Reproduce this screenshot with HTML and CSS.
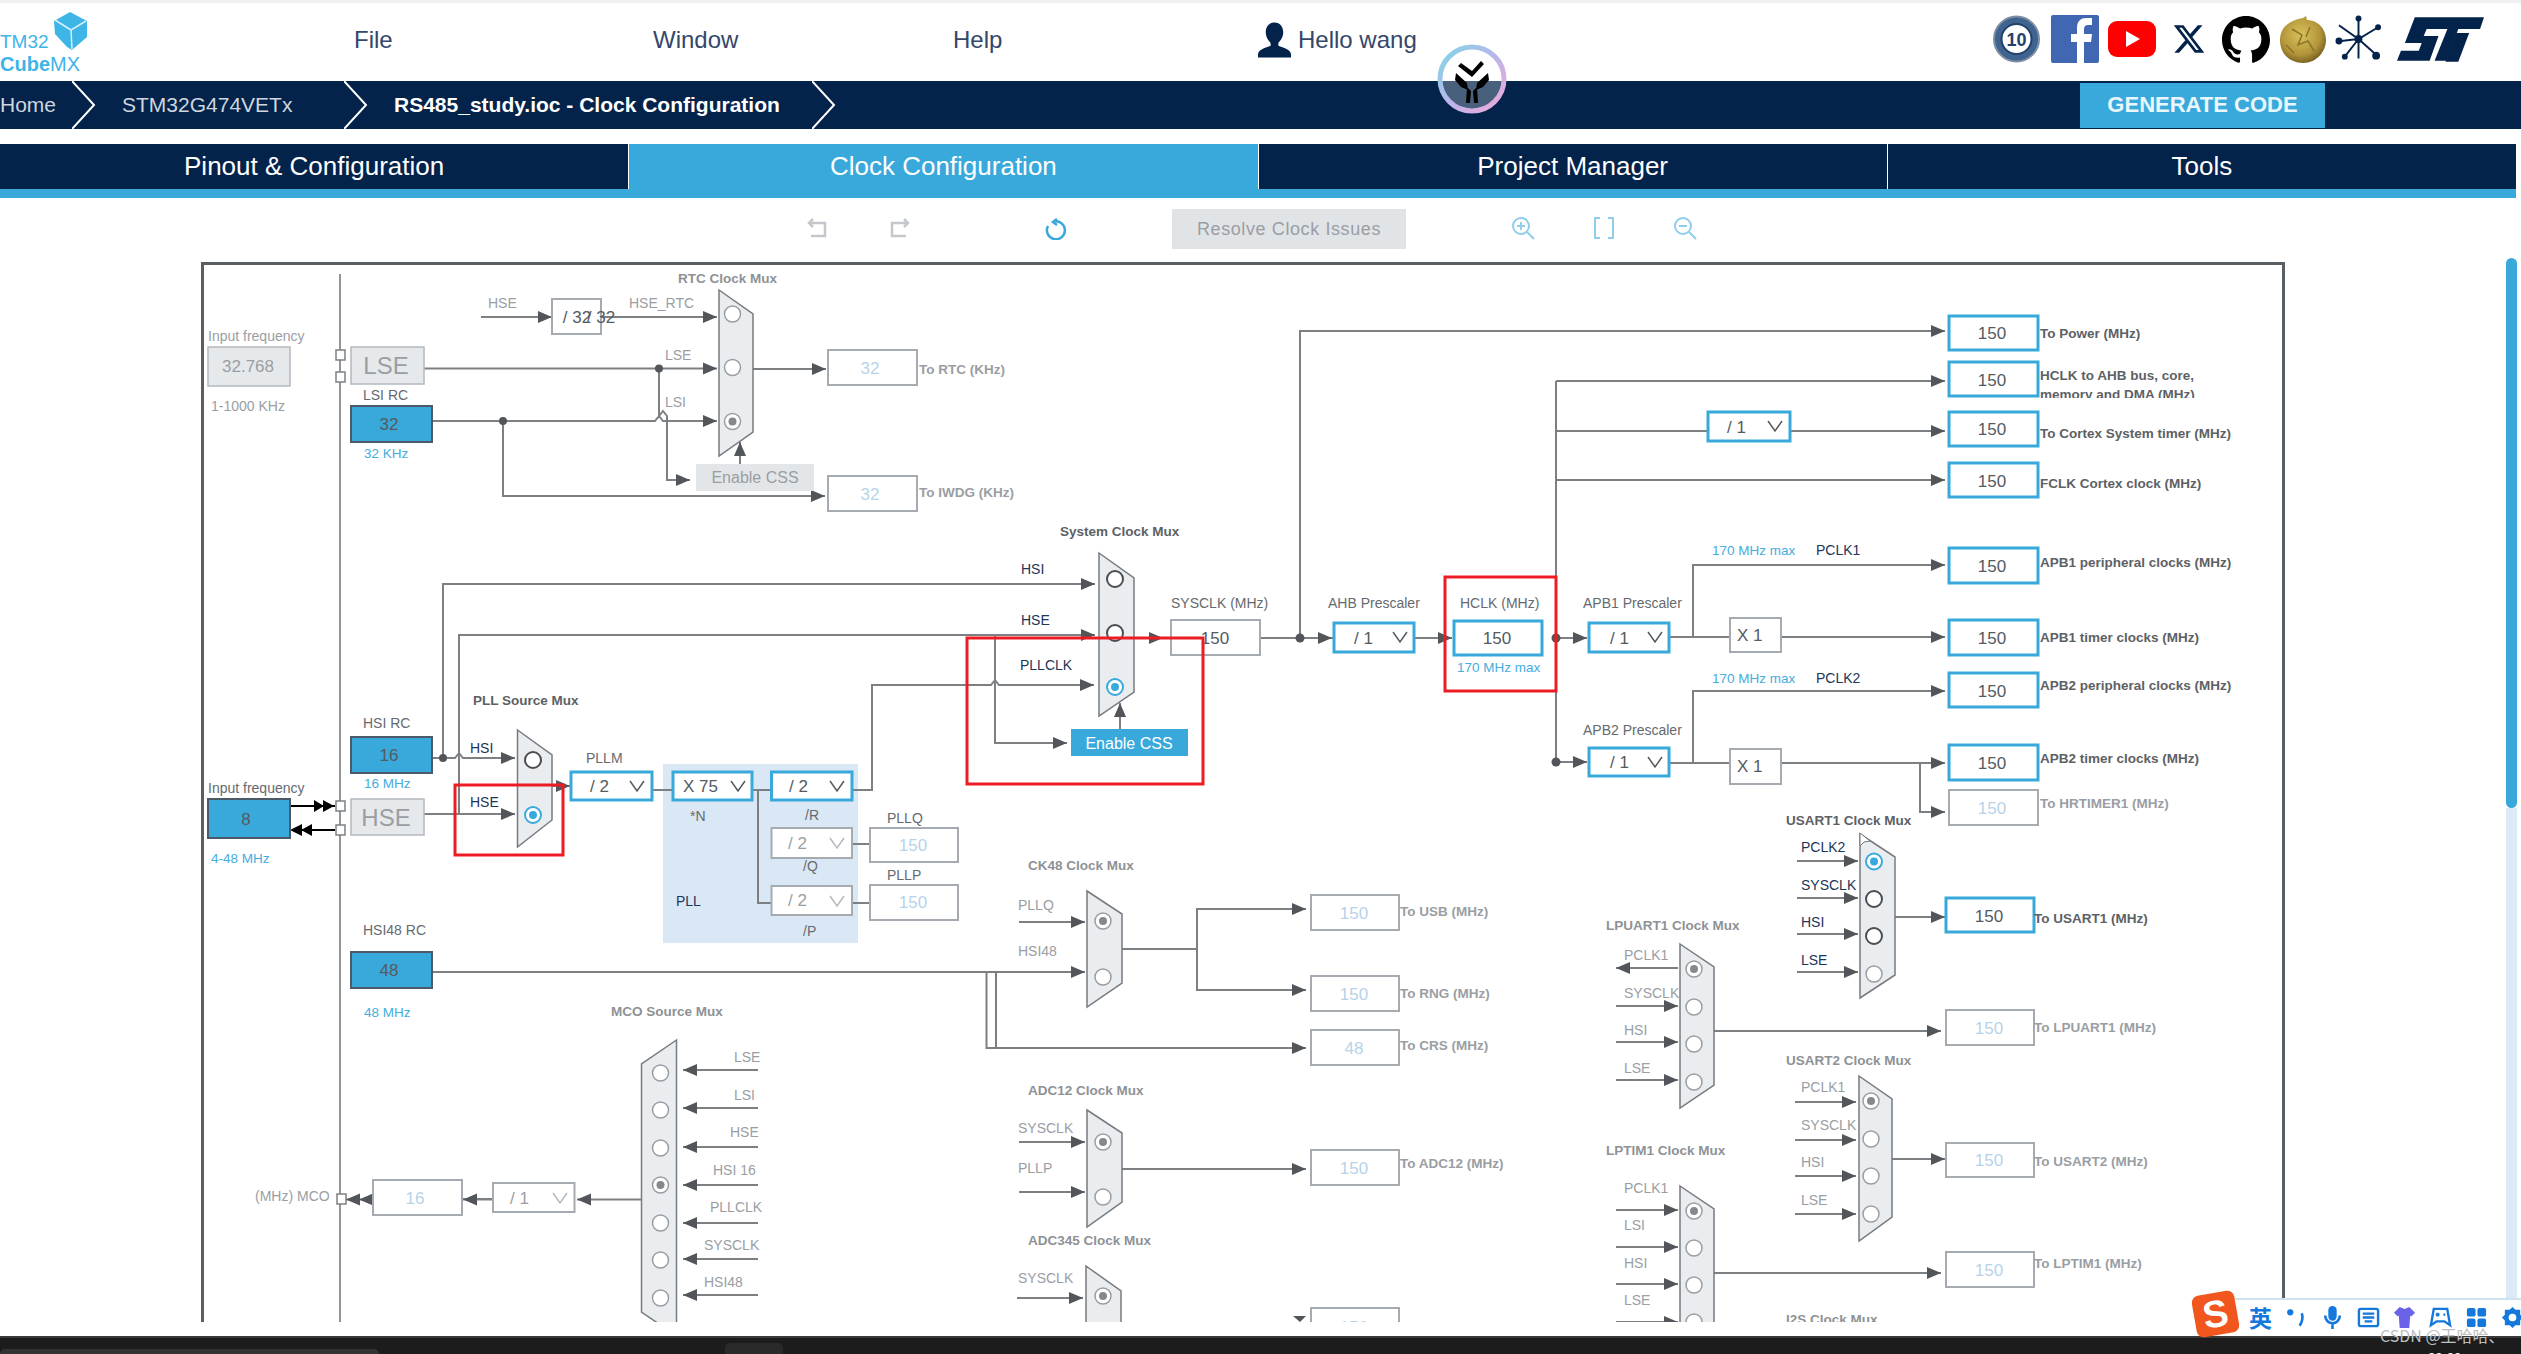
FILE: index.html
```html
<!DOCTYPE html>
<html lang="en">
<head>
<meta charset="utf-8">
<title>STM32CubeMX RS485_study.ioc: Clock Configuration</title>
<link rel="stylesheet" href="styles.css">
</head>
<body>
<div class="page">
  <header class="head">
    <div class="logo">
      <div class="logo-words"><div class="lg1">TM32</div><div class="lg2"><b>Cube</b>MX</div></div>
      <svg class="cube" viewBox="0 0 35 38"><path class="cube-a" d="M17 0 34 9 34 25 19 38 14 35 2 22 1 9Z"/><path class="cube-l" d="M2 8 18 18 33 9M18 18 19 37"/></svg>
    </div>
    <nav class="menu"><span>File</span><span>Window</span><span>Help</span></nav>
    <div class="user">
      <svg class="user-ic" viewBox="0 0 34 36"><path class="navy" d="M17 0c6 0 9 5 9 10 0 5-3 9-5 11v3c5 2 13 4 13 9v3H0v-3c0-5 8-7 13-9v-3c-2-2-5-6-5-11C8 5 11 0 17 0Z"/></svg>
      <span>Hello wang</span>
    </div>
    <div class="social">
      <svg class="s47" viewBox="0 0 47 48"><circle class="s10a" cx="23.500" cy="24" r="22.500"/><circle class="s10b" cx="23.500" cy="24" r="15"/><text class="s10t" x="23.500" y="25">10</text></svg>
      <svg class="s47 fb" viewBox="0 0 48 48"><rect class="fb-bg" width="48" height="48" rx="2"/><path class="white" d="M26 48V27h-6v-8h6v-6c0-7 4-10 9-10h6v7h-4c-3 0-4 2-4 4v5h8l-1 8h-7v21Z"/></svg>
      <svg class="s47 yt" viewBox="0 0 48 36"><rect class="yt-bg" width="48" height="36" rx="9"/><path class="white" d="M18 10v16l14-8Z"/></svg>
      <svg class="x-ic" viewBox="0 0 24 24"><path class="navy" d="M18.244 2.25h3.308l-7.227 8.26 8.502 11.24H16.17l-5.214-6.817L4.99 21.75H1.68l7.73-8.835L1.254 2.25H8.08l4.713 6.231zm-1.161 17.52h1.833L7.084 4.126H5.117z"/></svg>
      <svg class="s47 gh" viewBox="0 0 24 24"><path class="black" d="M12 .5C5.370.5 0 5.870 0 12.500c0 5.300 3.440 9.800 8.200 11.390.6.110.820-.260.820-.580v-2.030c-3.340.730-4.040-1.610-4.040-1.610-.550-1.390-1.340-1.760-1.340-1.760-1.090-.740.080-.730.080-.730 1.200.080 1.840 1.240 1.840 1.240 1.070 1.830 2.810 1.300 3.500 1 .110-.780.420-1.300.760-1.600-2.670-.3-5.470-1.330-5.470-5.930 0-1.310.470-2.380 1.240-3.220-.120-.3-.540-1.520.120-3.180 0 0 1.010-.320 3.300 1.230a11.500 11.500 0 0 1 6.020 0c2.290-1.550 3.300-1.230 3.300-1.230.660 1.660.240 2.880.120 3.180.770.840 1.240 1.910 1.240 3.220 0 4.610-2.810 5.620-5.480 5.920.430.370.820 1.100.820 2.220v3.290c0 .320.220.7.830.580C20.570 22.300 24 17.800 24 12.500 24 5.870 18.630.5 12 .5z"/></svg>
      <svg class="s47 wiki" viewBox="0 0 46 48">
        <defs><radialGradient id="wk" cx="45%" cy="40%" r="60%"><stop offset="0" stop-color="#d9c25a"/><stop offset=".7" stop-color="#b3953a"/><stop offset="1" stop-color="#7a6522"/></radialGradient></defs>
        <path fill="url(#wk)" d="M23 3 26 1 27 5C38 5 46 14 46 25S37 48 23 48 0 38 0 25 10 5 23 3Z"/>
        <path class="wk-l" d="M12 14 22 20 18 30 28 26 34 36M30 12 26 22M6 30 14 38"/>
      </svg>
      <svg class="s47 net" viewBox="0 0 48 48"><path class="net-l" d="M24 4 24 44M4 10 24 24 44 12M6 26 24 24 42 40M24 24 10 42"/><circle class="navy" cx="24" cy="3" r="3"/><circle class="navy" cx="4" cy="26" r="3.500"/><circle class="navy" cx="44" cy="12" r="3"/><circle class="navy" cx="42" cy="41" r="4"/><circle class="navy" cx="10" cy="42" r="3"/><circle class="navy" cx="24" cy="24" r="4"/></svg>
      <svg class="st" viewBox="0 0 88 48"><path class="navy" d="M18 2H88L84 14H62L50 46H38L51 14H30L27 21H42L33 46H0L4 36H22L25 28H8Z"/><path class="navy" d="M60 18H73L62 47 49 47Z"/></svg>
    </div>
  </header>

  <div class="crumbs">
    <span class="crumb c-home">Home</span>
    <svg class="chev" viewBox="0 0 24 48"><path d="M0 0 22 24 0 48"/></svg>
    <span class="crumb c-dev">STM32G474VETx</span>
    <svg class="chev" viewBox="0 0 24 48"><path d="M0 0 22 24 0 48"/></svg>
    <span class="crumb c-cur">RS485_study.ioc - Clock Configuration</span>
    <svg class="chev" viewBox="0 0 24 48"><path d="M0 0 22 24 0 48"/></svg>
    <button class="gen">GENERATE CODE</button>
  </div>

  <div class="tabs">
    <div class="tab">Pinout &amp; Configuration</div>
    <div class="tab on">Clock Configuration</div>
    <div class="tab">Project Manager</div>
    <div class="tab">Tools</div>
  </div>

  <div class="toolbar">
    <div class="tg g57">
      <svg class="ti mute" viewBox="0 0 24 24"><path d="M7 3 3 7 7 11M3 7H19V20H5"/></svg>
      <svg class="ti mute" viewBox="0 0 24 24"><path d="M17 3 21 7 17 11M21 7H5V20H19"/></svg>
    </div>
    <svg class="ti blue ml132" viewBox="0 0 24 24"><path d="M14 3 10 6 14 9M11 5.500A9 9 0 1 1 5 10"/></svg>
    <button class="resolve">Resolve Clock Issues</button>
    <div class="tg g57 ml105">
      <svg class="ti light" viewBox="0 0 24 24"><circle cx="10" cy="10" r="8"/><path d="M16 16 23 23M10 6V14M6 10H14"/></svg>
      <svg class="ti light" viewBox="0 0 24 24"><path d="M8 2H3V22H8M16 2H21V22H16"/></svg>
      <svg class="ti light" viewBox="0 0 24 24"><circle cx="10" cy="10" r="8"/><path d="M16 16 23 23M6 10H14"/></svg>
    </div>
  </div>

  <div class="stage">
    <div class="frame">
<svg class="dia" viewBox="204 265 2078 1057" width="2078" height="1057">
<defs>
  <marker id="a" markerUnits="userSpaceOnUse" markerWidth="15" markerHeight="14" refX="14" refY="7" orient="auto"><path class="ah" d="M0 1 14 7 0 13Z"/></marker>
  <marker id="k" markerUnits="userSpaceOnUse" markerWidth="15" markerHeight="14" refX="14" refY="7" orient="auto"><path class="ahk" d="M0 1 14 7 0 13Z"/></marker>
</defs>

<g class="pll"><rect x="663" y="764" width="195" height="179"/></g>
<path class="rail" d="M340 274V1322"/>

<!-- wires without arrowheads -->
<g class="w">
  <path d="M652 790H673M752 790H772M852 790H872M758 790V903H772M852 844H870M852 903H870M996 972V1047"/>
  <path d="M1781 637H1800M1693 637H1731M1669 637H1693M1693 763H1731M1669 763H1693M1300 638H1334M1197 949V949M1122 949H1197"/>
  <path d="M1556 381V620M1556 620V762M1556 431H1708"/>
  <path d="M462 1199H493"/>
</g>

<!-- wires with arrowheads -->
<g class="w" marker-end="url(#a)">
  <path d="M481 317H552"/>
  <path d="M601 317H717"/>
  <path d="M424 368.500H717"/>
  <path d="M659 368.500V416l4-5 4 5V480H690" class="nofill"/>
  <path d="M432 421H655l4-5 4 5H717"/>
  <path d="M503 421V496H825"/>
  <path d="M753 369H826"/>
  <path d="M740 464V442"/>
  <path d="M443 758V584H1095"/>
  <path d="M432 758H455l4-5 4 5H515"/>
  <path d="M459 814V635H1095"/>
  <path d="M424 814H515"/>
  <path d="M552 786H570"/>
  <path d="M872 791V685H991l4-5 4 5H1094"/>
  <path d="M995 635V743H1067"/>
  <path d="M1120 729V703"/>
  <path d="M1134 638H1163"/>
  <path d="M1260 638H1332"/>
  <path d="M1414 638H1452"/>
  <path d="M1556 638H1587"/>
  <path d="M1556 762H1587"/>
  <path d="M1300 638V331H1945"/>
  <path d="M1556 381H1945"/>
  <path d="M1790 431H1945"/>
  <path d="M1556 480H1945"/>
  <path d="M1693 637V565H1945"/>
  <path d="M1781 637H1945"/>
  <path d="M1693 763V691H1945"/>
  <path d="M1781 763H1945"/>
  <path d="M1920 763V812H1945"/>
  <path d="M432 972H1085"/>
  <path d="M986.500 972V1048H1306"/>
  <path d="M1019 922H1085"/>
  <path d="M1197 949V909H1306"/>
  <path d="M1197 949V990H1306"/>
  <path d="M1019 1142H1085"/>
  <path d="M1019 1192H1085"/>
  <path d="M1122 1169H1306"/>
  <path d="M1017 1298H1083"/>
  <path d="M1616 968H1678M1616 968" />
  <path d="M1616 1006H1678"/>
  <path d="M1616 1042H1678"/>
  <path d="M1616 1080H1678"/>
  <path d="M1616 1210H1678"/>
  <path d="M1616 1247H1678"/>
  <path d="M1616 1284H1678"/>
  <path d="M1616 1322H1678"/>
  <path d="M1714 1031H1941"/>
  <path d="M1714 1273H1941"/>
  <path d="M1797 861H1858"/>
  <path d="M1797 898H1858"/>
  <path d="M1797 934H1858"/>
  <path d="M1797 972H1858"/>
  <path d="M1895 917H1945"/>
  <path d="M1795 1102H1856"/>
  <path d="M1795 1140H1856"/>
  <path d="M1795 1176H1856"/>
  <path d="M1795 1214H1856"/>
  <path d="M1892 1159H1945"/>
  <path d="M758 1070H683"/>
  <path d="M758 1108H683"/>
  <path d="M758 1147H683"/>
  <path d="M758 1185H683"/>
  <path d="M758 1223H683"/>
  <path d="M758 1259H683"/>
  <path d="M758 1295H683"/>
  <path d="M641 1199.500H577"/>
  <path d="M493 1199.500H463"/>
  <path d="M372 1199.500H359"/>
  <path d="M360 1199.500H346"/>
</g>
<path class="ah" d="M1300 1322 1293 1316 1306 1316Z"/>

<!-- input clock connectors -->
<g class="wk">
  <path d="M290 806H335M302 830H335"/>
  <path class="ahk" d="M314 800 324 806 314 812ZM323 800 334 806 323 812ZM290 830 302 824 302 836ZM301 830 312 824 312 836Z"/>
</g>

<!-- junction dots -->
<g class="dot">
  <circle cx="659" cy="368.500" r="4"/><circle cx="503" cy="421" r="4"/><circle cx="443" cy="758" r="4"/>
  <circle cx="1300" cy="638" r="4.500"/><circle cx="1556" cy="638" r="4.500"/><circle cx="1556" cy="762" r="4.500"/>
</g>

<!-- ports -->
<g class="port">
  <rect x="336" y="350" width="9" height="10"/><rect x="336" y="372" width="9" height="10"/>
  <rect x="336" y="801" width="9" height="10"/><rect x="336" y="825" width="9" height="10"/>
  <rect x="337" y="1194" width="9" height="10"/>
</g>

<!-- muxes -->
<g class="mux">
  <path d="M719 290 753 314V432L719 456Z"/>
  <path d="M1099 553 1134 578V692L1099 716Z"/>
  <path d="M517.500 730 552 755V820L517.500 847Z"/>
  <path d="M1087 891 1122 914V983L1087 1007Z"/>
  <path d="M1087 1110 1122 1133V1202L1087 1227Z"/>
  <path d="M1086 1266 1121 1291V1340H1086Z"/>
  <path d="M1680 944 1714 967V1085L1680 1108Z"/>
  <path d="M1680 1186 1714 1209V1340H1680Z"/>
  <path d="M1860 834 1895 857V975L1860 998Z"/>
  <path d="M1859 1076 1892 1099V1217L1859 1241Z"/>
  <path d="M676.500 1040 641.500 1064V1312L676.500 1336Z"/>
</g>

<!-- radios: grey -->
<g class="r">
  <circle cx="732.500" cy="314" r="8"/><circle cx="732.500" cy="367.500" r="8"/><circle cx="732.500" cy="421.500" r="8"/>
  <circle cx="1103" cy="921" r="8"/><circle cx="1103" cy="977" r="8"/>
  <circle cx="1103" cy="1142" r="8"/><circle cx="1103" cy="1197" r="8"/>
  <circle cx="1103" cy="1296" r="8"/>
  <circle cx="1694" cy="969" r="8"/><circle cx="1694" cy="1007" r="8"/><circle cx="1694" cy="1044" r="8"/><circle cx="1694" cy="1082" r="8"/>
  <circle cx="1694" cy="1211" r="8"/><circle cx="1694" cy="1248" r="8"/><circle cx="1694" cy="1285" r="8"/><circle cx="1694" cy="1322" r="8"/>
  <circle cx="1874" cy="974" r="8"/>
  <circle cx="1871" cy="1101" r="8"/><circle cx="1871" cy="1139" r="8"/><circle cx="1871" cy="1176" r="8"/><circle cx="1871" cy="1214" r="8"/>
  <circle cx="660.500" cy="1073" r="8"/><circle cx="660.500" cy="1110" r="8"/><circle cx="660.500" cy="1148" r="8"/><circle cx="660.500" cy="1185" r="8"/><circle cx="660.500" cy="1223" r="8"/><circle cx="660.500" cy="1260" r="8"/><circle cx="660.500" cy="1298" r="8"/>
</g>
<g class="rd">
  <circle cx="533" cy="760" r="8"/><circle cx="1115" cy="579" r="8"/><circle cx="1115" cy="633" r="8"/>
  <circle cx="1874" cy="899" r="8"/><circle cx="1874" cy="936" r="8"/>
</g>
<g class="rb"><circle cx="533" cy="815" r="8"/><circle cx="1115" cy="687" r="8"/><circle cx="1874" cy="861.500" r="8"/></g>
<g class="ri-g">
  <circle cx="732.500" cy="421.500" r="4"/><circle cx="1103" cy="921" r="4"/><circle cx="1103" cy="1142" r="4"/><circle cx="1103" cy="1296" r="4"/>
  <circle cx="1694" cy="969" r="4"/><circle cx="1694" cy="1211" r="4"/><circle cx="1871" cy="1101" r="4"/><circle cx="660.500" cy="1185" r="4"/>
</g>
<g class="ri-b"><circle cx="533" cy="815" r="4"/><circle cx="1115" cy="687" r="4"/><circle cx="1874" cy="861.500" r="4"/></g>

<!-- source boxes -->
<g class="src">
  <rect x="351" y="406" width="81" height="36"/><rect x="351" y="737" width="81" height="36"/><rect x="351" y="952" width="81" height="36"/>
  <rect x="208" y="799" width="82" height="39"/>
</g>
<g class="gb">
  <rect x="208" y="347" width="82" height="39"/><rect x="351" y="347" width="73" height="37"/><rect x="351" y="799" width="73" height="36"/>
</g>

<!-- plain, on and off boxes -->
<g class="off">
  <rect x="552" y="299" width="49" height="35"/>
  <rect x="828" y="350" width="89" height="35"/><rect x="828" y="476" width="89" height="35"/>
  <rect x="1171" y="620" width="89" height="35"/>
  <rect x="1730" y="618" width="51" height="34"/><rect x="1730" y="749" width="51" height="35"/>
  <rect x="1949" y="790" width="89" height="35"/>
  <rect x="870" y="828" width="88" height="34"/><rect x="870" y="885" width="88" height="35"/>
  <rect x="771.500" y="828" width="80.500" height="30"/><rect x="771.500" y="886" width="80.500" height="29"/>
  <rect x="1311" y="895" width="88" height="35"/><rect x="1311" y="976" width="88" height="35"/><rect x="1311" y="1030" width="88" height="35"/><rect x="1311" y="1150" width="88" height="35"/><rect x="1311" y="1308" width="88" height="35"/>
  <rect x="1946" y="1010" width="88" height="35"/><rect x="1946" y="1143" width="88" height="34"/><rect x="1946" y="1252" width="88" height="35"/>
  <rect x="373" y="1180" width="89" height="35"/><rect x="493" y="1183" width="81.500" height="29"/>
</g>
<g class="on">
  <rect x="1949" y="316" width="89" height="34"/><rect x="1949" y="362" width="89" height="34"/><rect x="1949" y="412" width="89" height="34"/><rect x="1949" y="463" width="89" height="34"/>
  <rect x="1949" y="548" width="89" height="35"/><rect x="1949" y="620" width="89" height="35"/><rect x="1949" y="673" width="89" height="34"/><rect x="1949" y="745" width="89" height="35"/>
  <rect x="1946" y="898" width="88" height="34"/>
  <rect x="1454" y="621" width="88" height="34"/>
  <rect x="1334" y="623" width="80" height="29"/><rect x="1589" y="623" width="80" height="29"/><rect x="1589" y="748" width="80" height="28"/>
  <rect x="1708" y="412" width="82" height="29"/>
  <rect x="571" y="772" width="81" height="28"/><rect x="673" y="772" width="79" height="28"/><rect x="771.500" y="772" width="80.500" height="28"/>
</g>

<!-- select chevrons -->
<g class="chv-on">
  <path d="M1393 632 1400 642 1407 632M1648 632 1655 642 1662 632M1648 757 1655 767 1662 757M1768 421 1775 431 1782 421M630 781 637 791 644 781M731 781 738 791 745 781M830 781 837 791 844 781"/>
</g>
<g class="chv-off">
  <path d="M830 838 837 848 844 838M830 896 837 906 844 896M553 1193 560 1203 567 1193"/>
</g>

<rect class="css-off" x="696" y="464" width="118" height="27"/>
<rect class="css-on" x="1071" y="729" width="117" height="27"/>
<text class="t tb17 c css-t-off" x="755" y="477">Enable CSS</text>
<text class="t tb17 c white" x="1129" y="743">Enable CSS</text>

<!-- values on -->
<g class="t v c">
  <text x="1992" y="333">150</text><text x="1992" y="380">150</text><text x="1992" y="429">150</text><text x="1992" y="481">150</text>
  <text x="1992" y="566">150</text><text x="1992" y="638">150</text><text x="1992" y="691">150</text><text x="1992" y="763">150</text>
  <text x="1989" y="916">150</text><text x="1497" y="638">150</text><text x="1215" y="638">150</text>
  <text x="389" y="424">32</text><text x="389" y="755">16</text><text x="389" y="970">48</text><text x="246" y="819">8</text>
  <text x="601" y="317">/ 32</text>
</g>
<g class="t v">
  <text x="1354" y="638">/ 1</text><text x="1610" y="638">/ 1</text><text x="1610" y="762">/ 1</text><text x="1727" y="427">/ 1</text>
  <text x="590" y="786">/ 2</text><text x="683" y="786">X 75</text><text x="789" y="786">/ 2</text>
  <text x="1737" y="635">X 1</text><text x="1737" y="766">X 1</text>
</g>
<text class="t v c" x="577" y="317">/ 32</text>
<!-- values off -->
<g class="t v vo c">
  <text x="870" y="368">32</text><text x="870" y="494">32</text><text x="1992" y="808">150</text>
  <text x="913" y="845">150</text><text x="913" y="902">150</text>
  <text x="1354" y="913">150</text><text x="1354" y="994">150</text><text x="1354" y="1048">48</text><text x="1354" y="1168">150</text>
  <text x="1989" y="1028">150</text><text x="1989" y="1160">150</text><text x="1989" y="1270">150</text><text x="415" y="1198">16</text>
  <text x="1354" y="1327">150</text>
</g>
<g class="t v vg">
  <text x="788" y="843">/ 2</text><text x="788" y="900">/ 2</text><text x="510" y="1198">/ 1</text>
</g>
<g class="t v vg c"><text x="248" y="366">32.768</text></g>
<g class="t big vg c"><text x="386" y="365">LSE</text><text x="386" y="817">HSE</text></g>

<!-- blue notes -->
<g class="t n">
  <text x="364" y="453">32 KHz</text><text x="364" y="783">16 MHz</text><text x="364" y="1012">48 MHz</text><text x="211" y="858">4-48 MHz</text>
  <text x="1457" y="667">170 MHz max</text><text x="1712" y="550">170 MHz max</text><text x="1712" y="678">170 MHz max</text>
</g>

<!-- dim labels -->
<g class="t dim">
  <text x="208" y="336">Input frequency</text><text x="211" y="406">1-1000 KHz</text>
  <text x="488" y="303">HSE</text><text x="629" y="303">HSE_RTC</text><text x="665" y="355">LSE</text><text x="665" y="402">LSI</text>
  <text x="1018" y="905">PLLQ</text><text x="1018" y="951">HSI48</text><text x="1018" y="1128">SYSCLK</text><text x="1018" y="1168">PLLP</text><text x="1018" y="1278">SYSCLK</text>
  <text x="1624" y="955">PCLK1</text><text x="1624" y="993">SYSCLK</text><text x="1624" y="1030">HSI</text><text x="1624" y="1068">LSE</text>
  <text x="1624" y="1188">PCLK1</text><text x="1624" y="1225">LSI</text><text x="1624" y="1263">HSI</text><text x="1624" y="1300">LSE</text>
  <text x="1801" y="1087">PCLK1</text><text x="1801" y="1125">SYSCLK</text><text x="1801" y="1162">HSI</text><text x="1801" y="1200">LSE</text>
  <text x="734" y="1057">LSE</text><text x="734" y="1095">LSI</text><text x="730" y="1132">HSE</text><text x="713" y="1170">HSI 16</text><text x="710" y="1207">PLLCLK</text><text x="704" y="1245">SYSCLK</text><text x="704" y="1282">HSI48</text>
  <text x="255" y="1196">(MHz) MCO</text>
</g>

<!-- mid labels -->
<g class="t mid">
  <text x="363" y="395">LSI RC</text><text x="363" y="723">HSI RC</text><text x="363" y="930">HSI48 RC</text><text x="208" y="788">Input frequency</text>
  <text x="586" y="758">PLLM</text><text x="690" y="816">*N</text><text x="805" y="815">/R</text><text x="803" y="866">/Q</text><text x="803" y="931">/P</text><text x="887" y="818">PLLQ</text><text x="887" y="875">PLLP</text>
  <text x="1171" y="603">SYSCLK (MHz)</text><text x="1328" y="603">AHB Prescaler</text><text x="1460" y="603">HCLK (MHz)</text><text x="1583" y="603">APB1 Prescaler</text><text x="1583" y="730">APB2 Prescaler</text>
</g>

<!-- navy labels -->
<g class="t dk">
  <text x="470" y="748">HSI</text><text x="470" y="802">HSE</text><text x="676" y="901">PLL</text>
  <text x="1021" y="569">HSI</text><text x="1021" y="620">HSE</text><text x="1020" y="665">PLLCLK</text>
  <text x="1816" y="550">PCLK1</text><text x="1816" y="678">PCLK2</text>
  <text x="1801" y="847">PCLK2</text><text x="1801" y="885">SYSCLK</text><text x="1801" y="922">HSI</text><text x="1801" y="960">LSE</text>
</g>

<!-- mux titles -->
<g class="t tl">
  <text x="678" y="278">RTC Clock Mux</text><text x="1028" y="865">CK48 Clock Mux</text><text x="1028" y="1090">ADC12 Clock Mux</text><text x="1028" y="1240">ADC345 Clock Mux</text>
  <text x="1606" y="925">LPUART1 Clock Mux</text><text x="1606" y="1150">LPTIM1 Clock Mux</text>
  <text x="1786" y="1060">USART2 Clock Mux</text><text x="1786" y="1319">I2S Clock Mux</text><text x="611" y="1011">MCO Source Mux</text>
</g>
<g class="t tl tld">
  <text x="473" y="700">PLL Source Mux</text><text x="1060" y="531">System Clock Mux</text><text x="1786" y="820">USART1 Clock Mux</text>
</g>

<!-- outputs active -->
<g class="t out">
  <text x="2040" y="333">To Power (MHz)</text><text x="2040" y="375">HCLK to AHB bus, core,</text>
  <text x="2040" y="433">To Cortex System timer (MHz)</text><text x="2040" y="483">FCLK Cortex clock (MHz)</text>
  <text x="2040" y="562">APB1 peripheral clocks (MHz)</text><text x="2040" y="637">APB1 timer clocks (MHz)</text>
  <text x="2040" y="685">APB2 peripheral clocks (MHz)</text><text x="2040" y="758">APB2 timer clocks (MHz)</text>
  <text x="2034" y="918">To USART1 (MHz)</text>
</g>
<svg x="2036" y="385" width="240" height="13"><text class="t out" x="4" y="9">memory and DMA (MHz)</text></svg>

<!-- outputs inactive -->
<g class="t out outd">
  <text x="919" y="369">To RTC (KHz)</text><text x="919" y="492">To IWDG (KHz)</text>
  <text x="2040" y="803">To HRTIMER1 (MHz)</text>
  <text x="1400" y="911">To USB (MHz)</text><text x="1400" y="993">To RNG (MHz)</text><text x="1400" y="1045">To CRS (MHz)</text><text x="1400" y="1163">To ADC12 (MHz)</text>
  <text x="2034" y="1027">To LPUART1 (MHz)</text><text x="2034" y="1161">To USART2 (MHz)</text><text x="2034" y="1263">To LPTIM1 (MHz)</text>
</g>

<path class="cursor" d="M1860 833V846L1864 842 1870 841Z"/>

<!-- annotations -->
<g class="red">
  <rect x="455" y="785" width="108" height="70"/>
  <rect x="967" y="638" width="236" height="146"/>
  <rect x="1445" y="577" width="111" height="114"/>
</g>
</svg>
    </div>
    <div class="scroll"><div class="thumb"></div><div class="track"></div></div>
  </div>

  <footer class="task">
    <div class="task-a"></div>
    <div class="task-b"></div>
    <div class="clock">20:00</div>
  </footer>

  <div class="badge">
    <svg viewBox="0 0 70 72">
      <defs><linearGradient id="rg" x1="0" y1="0" x2="1" y2="1"><stop offset="0" stop-color="#7fd6e8"/><stop offset=".5" stop-color="#b9b6ea"/><stop offset="1" stop-color="#f0a9d6"/></linearGradient></defs>
      <circle class="bd-f" cx="35" cy="36" r="32"/>
      <circle fill="none" stroke="url(#rg)" stroke-width="5" cx="35" cy="36" r="32"/>
      <path class="black" d="M24 20 35 28 44 18 47 21 35 34 21 23ZM19 30 30 40 31 47 24 44 18 37ZM51 30 40 40 39 47 46 44 52 37ZM30 44 34 48 33 60 29 60ZM40 44 36 48 37 60 41 60Z"/>
    </svg>
  </div>

  <div class="ime">
    <span class="ime-zh">英</span>
    <svg class="ime-i" viewBox="0 0 20 24"><circle class="imec" cx="4" cy="7" r="3"/><path class="imel" d="M15 8C17 13 15 17 13 20"/></svg>
    <svg class="ime-i" viewBox="0 0 20 24"><rect class="imec" x="6" y="1" width="8" height="14" rx="4"/><path class="imel" d="M3 10C3 20 17 20 17 10M10 18V23"/></svg>
    <svg class="ime-i" viewBox="0 0 24 24"><rect class="imel" x="2" y="3" width="20" height="18" rx="2"/><path class="imel" d="M6 8H18M6 12H18M8 16H16"/></svg>
    <svg class="ime-i" viewBox="0 0 24 24"><path class="imes" d="M7 1 12 3 17 1 23 7 19 11 18 10 17 23H7L6 10 5 11 1 7Z"/></svg>
    <svg class="ime-i" viewBox="0 0 24 24"><path class="imel" d="M5 3H19L22 20 16 16H8L2 20Z"/><path class="imel" d="M7 9H11M9 7V11M15 9H17"/></svg>
    <svg class="ime-i" viewBox="0 0 24 24"><rect class="imec" x="2" y="2" width="9" height="9" rx="2"/><rect class="imec" x="13" y="2" width="9" height="9" rx="2"/><rect class="imec" x="2" y="13" width="9" height="9" rx="2"/><rect class="imec" x="13" y="13" width="9" height="9" rx="2"/></svg>
    <svg class="ime-i" viewBox="0 0 24 24"><path class="imec" d="M12 1 15 4 20 4 20 9 23 12 20 15 20 20 15 20 12 23 9 20 4 20 4 15 1 12 4 9 4 4 9 4Z"/><circle class="white" cx="12" cy="12" r="4"/></svg>
  </div>
  <div class="sogou"><span>S</span></div>
  <div class="mark">CSDN @王哈哈、</div>
</div>
</body>
</html>
```

FILE: styles.css
```css
html, body { margin: 0; padding: 0; background: #fff; }
body { font-family: "Liberation Sans", Arial, sans-serif; }
.page { position: relative; width: 2521px; height: 1354px; overflow: hidden; background: #fff; display: flex; flex-direction: column; }

/* header */
.head { height: 78px; border-top: 3px solid #f0f0f0; display: flex; align-items: center; color: #34476b; font-size: 24px; }
.logo { width: 88px; height: 78px; position: relative; flex: none; }
.logo-words { padding-top: 28px; color: #3fb4e6; line-height: 22px; }
.lg1 { font-size: 19px; }
.lg2 { font-size: 20px; }
.cube { position: absolute; left: 53px; top: 9px; width: 35px; height: 38px; }
.cube-a { fill: #3db5e6; }
.cube-l { fill: none; stroke: #d8f0fb; stroke-width: 1.5; }
.menu { display: grid; grid-template-columns: 299px 300px 305px; margin-left: 266px; margin-top: -4px; }
.user { display: flex; align-items: center; gap: 7px; margin-top: -4px; }
.user-ic { width: 33px; height: 36px; }
.navy { fill: #03234b; }
.white { fill: #fff; }
.black { fill: #000; }
.social { margin-left: auto; margin-right: 37px; display: flex; align-items: center; height: 50px; margin-top: -6px; }
.s47 { width: 47px; height: 48px; display: block; flex: none; }
.s10a { fill: #3f6490; stroke: #7f8ea3; stroke-width: 2; }
.s10b { fill: #fff; stroke: #23406b; stroke-width: 2; }
.s10t { font: bold 18px "Liberation Sans", sans-serif; fill: #23406b; text-anchor: middle; dominant-baseline: central; }
.fb { margin-left: 11px; width: 48px; }
.fb-bg { fill: #4267b2; }
.yt { margin-left: 9px; width: 48px; height: 36px; }
.yt-bg { fill: #f00; }
.x-ic { width: 34px; height: 38px; margin-left: 16px; }
.gh { margin-left: 16px; width: 48px; }
.wiki { margin-left: 10px; width: 46px; }
.wk-l { fill: none; stroke: #8a7428; stroke-width: 1.5; }
.net { margin-left: 9px; }
.net-l { fill: none; stroke: #03234b; stroke-width: 2; }
.st { width: 87px; height: 48px; margin-left: 15px; flex: none; }

/* breadcrumb */
.crumbs { height: 48px; background: #03234b; display: flex; align-items: center; color: #cfd6df; font-size: 21px; }
.crumb { white-space: nowrap; }
.c-home { width: 72px; }
.c-dev { width: 222px; padding-left: 26px; }
.c-cur { width: 418px; padding-left: 26px; color: #fff; font-weight: bold; }
.chev { width: 24px; height: 48px; flex: none; }
.chev path { fill: none; stroke: #fff; stroke-width: 2; }
.gen { margin-left: 1244px; width: 245px; height: 45px; border: 0; padding: 0; background: #39a9dc; color: #e9f6fc; font: bold 22px "Liberation Sans", sans-serif; }

/* tabs */
.tabs { margin-top: 15px; width: 2516px; display: grid; grid-template-columns: repeat(4, 1fr); gap: 1px; border-bottom: 9px solid #39a9dc; background: #fff; }
.tab { height: 45px; background: #03234b; color: #fff; font-size: 26px; display: flex; align-items: center; justify-content: center; }
.tab.on { background: #39a9dc; }

/* toolbar */
.toolbar { height: 64px; box-sizing: border-box; padding: 11px 0 0 806px; display: flex; align-items: flex-start; }
.tg { display: flex; }
.g57 { gap: 57px; }
.ml132 { margin-left: 132px; }
.ml105 { margin-left: 105px; }
.ti { width: 24px; height: 24px; flex: none; margin-top: 7px; fill: none; stroke-width: 2; }
.mute { stroke: #c4c8cc; stroke-width: 2.500; }
.blue { stroke: #39a9dc; stroke-width: 2.500; }
.light { stroke: #8fcdec; }
.resolve { margin-left: 105px; width: 234px; height: 40px; border: 0; padding: 0; background: #e1e4e7; color: #9a9ea3; font: 18px "Liberation Sans", sans-serif; letter-spacing: .6px; }

/* stage */
.stage { display: flex; height: 1060px; margin-left: 201px; }
.frame { width: 2084px; height: 1060px; box-sizing: border-box; border: 3px solid #5a5f63; border-bottom: 0; flex: none; overflow: hidden; }
.dia { display: block; }
.scroll { margin: -4px 0 0 221px; width: 11px; height: 1064px; display: flex; flex-direction: column; }
.thumb { height: 550px; background: #39a9dc; border-radius: 6px; }
.track { flex: 1; background: #dbeaf6; }

/* diagram */
.t { font-family: "Liberation Sans", Arial, sans-serif; dominant-baseline: central; }
.c { text-anchor: middle; }
.pll rect { fill: #dae8f5; }
.rail { fill: none; stroke: #6f7377; stroke-width: 1.500; }
.w path { fill: none; stroke: #7d8083; stroke-width: 2; }
.ah { fill: #52565a; }
.ahk { fill: #000; stroke: none; }
.wk path { stroke: #000; stroke-width: 2; fill: none; }
.wk .ahk { fill: #000; stroke: none; }
.dot { fill: #52565a; }
.port rect { fill: #fff; stroke: #7d8083; stroke-width: 1.500; }
.mux path { fill: #e9edf0; stroke: #777b80; stroke-width: 1.500; }
.r circle { fill: #fff; stroke: #9a9ea3; stroke-width: 1.500; }
.rd circle { fill: #fff; stroke: #4a4e52; stroke-width: 2; }
.rb circle { fill: #fff; stroke: #39a9dc; stroke-width: 2; }
.ri-g { fill: #85898e; }
.ri-b { fill: #39a9dc; }
.src rect { fill: #39a9dc; stroke: #4b5a66; stroke-width: 2; }
.gb rect { fill: #e6e9ec; stroke: #b4b9be; stroke-width: 1.500; }
.off rect { fill: #fff; stroke: #a5abb1; stroke-width: 2; }
.on rect { fill: #fff; stroke: #39a9dc; stroke-width: 3; }
.chv-on path { fill: none; stroke: #555a5f; stroke-width: 1.500; }
.chv-off path { fill: none; stroke: #b4b9be; stroke-width: 1.500; }
.css-off { fill: #e3e6e8; }
.css-on { fill: #39a9dc; }
.tb17 { font-size: 16px; }
.css-t-off { fill: #9a9ea3; }
.v { font-size: 17px; fill: #555a5f; }
.vo { fill: #b6d3ea; }
.vg { fill: #9a9ea3; }
.big { font-size: 24px; }
.n { font-size: 13.500px; fill: #45ade0; }
.dim { font-size: 14px; fill: #9a9ea3; }
.mid { font-size: 14px; fill: #666a6e; }
.dk { font-size: 14px; fill: #1d3557; }
.tl { font-size: 13.500px; font-weight: bold; fill: #8e9296; }
.tld { fill: #5d6165; }
.out { font-size: 13.500px; font-weight: bold; fill: #5d6165; }
.outd { fill: #9a9ea3; }
.cursor { fill: #fff; stroke: #777; stroke-width: 1; }
.red rect { fill: none; stroke: #ed1c24; stroke-width: 3; }

/* bottom */
.task { margin-top: 14px; height: 18px; box-sizing: border-box; border-top: 2px solid #3b3b3b; background: #1c1c1c; display: flex; align-items: flex-end; overflow: hidden; }
.task-a { width: 379px; height: 5px; background: #333; border-radius: 8px 8px 0 0; }
.task-b { margin-left: 346px; width: 58px; height: 11px; background: #2a2a2a; border-radius: 5px 5px 0 0; }
.clock { margin-left: 1645px; color: #fff; font-size: 13px; font-weight: bold; line-height: 13px; height: 3px; }

.badge { position: absolute; left: 1437px; top: 43px; width: 70px; height: 72px; }
.badge svg { display: block; width: 70px; height: 72px; }
.bd-f { fill: rgba(255, 255, 255, .28); }

.ime { position: absolute; left: 2235px; top: 1298px; width: 286px; height: 37px; box-sizing: border-box; border-top: 2px solid #cfe2f0; background: #fff; display: flex; align-items: center; padding-left: 14px; gap: 13px; }
.ime-zh { font: bold 23px "Noto Sans CJK SC", sans-serif; color: #1478dc; line-height: 1; }
.ime-i { width: 23px; height: 25px; flex: none; }
.imec { fill: #1478dc; }
.imel { fill: none; stroke: #1478dc; stroke-width: 2.500; }
.imes { fill: #6a63e8; }
.sogou { position: absolute; left: 2194px; top: 1293px; width: 43px; height: 42px; background: #f0561e; border-radius: 7px; transform: rotate(-10deg); display: flex; align-items: center; justify-content: center; color: #fff; font: bold 38px "Liberation Sans", sans-serif; }
.mark { position: absolute; left: 2380px; top: 1325px; font: 16px "Noto Sans CJK SC", sans-serif; line-height: 20px; color: #bcc0c4; }
```
